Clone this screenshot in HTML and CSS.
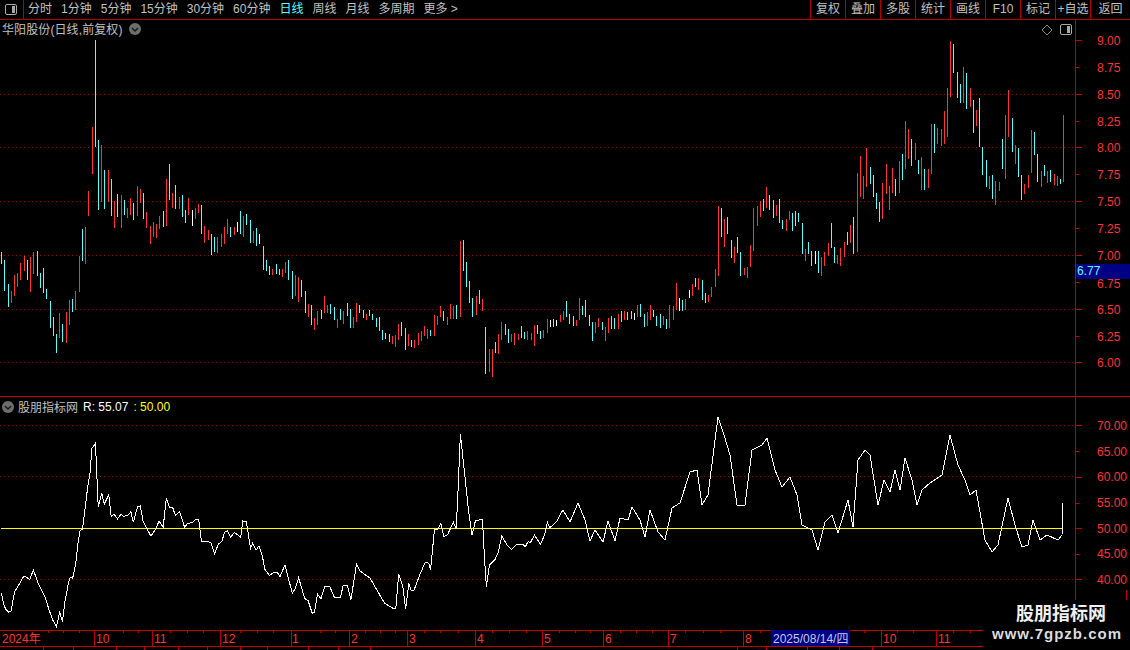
FILE: index.html
```html
<!DOCTYPE html>
<html lang="zh-CN">
<head>
<meta charset="utf-8">
<title>华阳股份</title>
<link rel="stylesheet" href="styles.css">
</head>
<body>
<div class="app">
  <header class="toolbar">
    <div class="layout-btn">
      <svg class="icon-panel" viewBox="0 0 12 11"><rect x="0.5" y="0.5" width="11" height="10" rx="1.5" class="panel-frame"/><rect x="7" y="2" width="3" height="7" class="panel-fill"/></svg>
    </div>
    <nav class="periods">
      <span>分时</span><span>1分钟</span><span>5分钟</span><span>15分钟</span><span>30分钟</span><span>60分钟</span><span class="active">日线</span><span>周线</span><span>月线</span><span>多周期</span><span>更多 &gt;</span>
    </nav>
    <nav class="actions">
      <span>复权</span><span>叠加</span><span>多股</span><span>统计</span><span>画线</span><span>F10</span><span>标记</span><span>+自选</span><span class="back">返回</span>
    </nav>
  </header>

  <section class="pane price-pane">
    <svg class="canvas" viewBox="0 20 1130 376">
      <path class="grid" d="M0 94.5H1075M0 147.5H1075M0 201.5H1075M0 255.5H1075M0 309.5H1075M0 362.5H1075"/>
      <path class="axis" d="M1075.5 20V396M1075 40.5h7M1075 67.5h4M1075 94.5h7M1075 121.5h4M1075 147.5h7M1075 174.5h4M1075 201.5h7M1075 228.5h4M1075 255.5h7M1075 282.5h4M1075 309.5h7M1075 336.5h4M1075 362.5h7"/>
      <path class="bar bar-red" d="M11.5 291V303M14.5 275V296M17.5 273V287M20.5 263V280M24.5 256V271M30.5 257V292M33.5 252V274M59.5 313V338M66.5 312V343M69.5 300V325M75.5 291V310M79.5 256V292M85.5 227V264M88.5 191V216M92.5 127V174M101.5 145V202M108.5 170V202M114.5 201V228M121.5 195V228M127.5 208V218M130.5 198V215M137.5 186V216M140.5 189V203M146.5 212V228M150.5 226V244M153.5 222V237M156.5 224V238M159.5 216V229M166.5 179V226M172.5 193V208M179.5 197V209M188.5 198V215M195.5 208V219M198.5 204V213M204.5 226V243M208.5 230V240M217.5 237V253M221.5 234V247M224.5 227V244M227.5 219V234M234.5 227V235M243.5 216V237M253.5 231V243M272.5 269V275M282.5 269V277M285.5 262V273M295.5 275V296M298.5 277V302M308.5 304V317M314.5 318V330M317.5 311V325M324.5 296V313M327.5 305V313M337.5 319V328M343.5 311V324M353.5 317V328M356.5 303V322M366.5 314V320M392.5 336V344M395.5 335V347M398.5 324V340M408.5 334V346M414.5 340V348M418.5 333V345M421.5 331V341M424.5 326V336M427.5 329V339M434.5 315V336M437.5 316V325M440.5 306V317M447.5 317V325M450.5 304V319M453.5 306V319M460.5 241V317M476.5 296V315M482.5 299V311M489.5 349V372M492.5 349V377M498.5 334V354M501.5 322V340M511.5 334V342M514.5 333V345M518.5 334V340M527.5 331V340M531.5 333V340M534.5 325V346M543.5 330V338M547.5 319V333M560.5 315V322M563.5 311V320M576.5 320V326M579.5 298V320M595.5 322V333M598.5 318V327M605.5 327V341M608.5 318V333M618.5 314V329M624.5 311V320M637.5 305V317M647.5 312V326M650.5 305V320M663.5 316V325M669.5 305V328M673.5 306V320M676.5 283V310M685.5 299V310M692.5 284V296M698.5 278V290M708.5 295V302M711.5 287V297M715.5 269V287M718.5 206V276M724.5 219V247M734.5 247V263M744.5 268V275M747.5 267V278M750.5 245V267M753.5 208V251M757.5 206V226M760.5 201V217M766.5 187V208M776.5 205V216M786.5 219V231M789.5 211V220M805.5 249V261M821.5 257V276M824.5 252V266M828.5 243V256M837.5 255V264M840.5 248V266M844.5 242V257M850.5 225V243M857.5 173V252M860.5 156V197M863.5 176V199M866.5 148V187M882.5 183V219M886.5 164V194M889.5 186V210M892.5 168V193M899.5 161V193M905.5 121V169M908.5 129V159M915.5 143V160M921.5 157V190M928.5 169V188M931.5 124V174M937.5 128V144M941.5 129V146M944.5 111V144M947.5 88V137M950.5 41V97M963.5 67V103M970.5 88V107M976.5 110V126M989.5 176V189M995.5 181V205M999.5 182V191M1005.5 115V179M1008.5 90V137M1015.5 145V164M1024.5 184V194M1028.5 175V188M1031.5 130V173M1041.5 171V187M1047.5 171V183M1054.5 174V185M1057.5 176V186M1063.5 115V182"/>
      <path class="bar bar-cyan" d="M1.5 252V264M4.5 260V291M8.5 284V307M27.5 260V280M37.5 251V276M40.5 273V288M43.5 268V293M46.5 289V299M50.5 301V328M53.5 317V336M56.5 334V353M62.5 324V342M72.5 299V312M82.5 229V261M95.5 40V147M98.5 140V210M104.5 170V209M111.5 179V216M117.5 194V217M124.5 200V215M133.5 203V220M143.5 193V219M163.5 211V227M169.5 164V200M175.5 185V209M182.5 195V217M185.5 210V223M201.5 205V234M211.5 234V255M214.5 237V252M230.5 227V237M240.5 211V234M246.5 214V225M250.5 220V243M256.5 228V246M263.5 246V270M266.5 260V271M269.5 266V275M276.5 264V274M279.5 269V275M288.5 260V280M292.5 271V299M301.5 280V297M305.5 291V313M311.5 305V325M321.5 310V319M330.5 304V314M334.5 307V320M340.5 309V320M347.5 303V316M350.5 309V328M359.5 305V313M363.5 310V318M369.5 310V316M372.5 314V320M376.5 318V327M379.5 317V331M382.5 330V340M385.5 333V339M389.5 334V342M401.5 322V336M405.5 328V350M411.5 340V347M430.5 330V336M443.5 311V321M456.5 305V319M463.5 240V271M466.5 262V287M469.5 281V303M472.5 298V317M479.5 290V304M485.5 327V374M495.5 342V353M505.5 324V335M508.5 329V343M521.5 326V338M524.5 332V339M537.5 325V334M540.5 331V339M553.5 319V327M566.5 301V317M569.5 314V324M573.5 316V326M582.5 306V315M585.5 300V317M589.5 315V326M592.5 322V341M602.5 322V330M611.5 316V329M614.5 318V329M621.5 311V322M627.5 312V320M631.5 311V319M640.5 304V317M644.5 314V327M653.5 310V317M656.5 316V326M660.5 314V328M666.5 319V329M682.5 300V311M695.5 278V287M702.5 280V300M705.5 293V303M721.5 208V237M727.5 217V234M731.5 240V258M737.5 237V253M740.5 252V276M763.5 199V211M769.5 195V210M773.5 200V218M779.5 199V223M782.5 220V229M792.5 213V231M795.5 211V226M798.5 213V222M802.5 223V254M808.5 242V254M811.5 251V266M818.5 251V273M831.5 223V248M834.5 247V263M847.5 232V245M853.5 217V254M870.5 167V184M873.5 175V197M876.5 193V209M879.5 202V222M895.5 179V196M902.5 154V180M911.5 139V166M918.5 160V174M924.5 169V190M934.5 124V153M953.5 44V73M957.5 72V98M960.5 84V103M966.5 73V109M973.5 100V133M979.5 98V147M982.5 147V175M986.5 160V187M992.5 175V199M1002.5 139V169M1012.5 118V152M1018.5 148V177M1021.5 175V200M1034.5 132V155M1037.5 154V182M1044.5 165V176M1050.5 170V182M1060.5 179V184"/>
      <path class="bar bar-white" d="M192.5 210V226M237.5 222V232M259.5 234V244M550.5 320V327M556.5 320V326M634.5 313V320M679.5 298V311M689.5 290V298M815.5 251V264"/>
      <g class="labels">
        <text x="1097" y="45">9.00</text><text x="1097" y="72">8.75</text><text x="1097" y="99">8.50</text><text x="1097" y="126">8.25</text><text x="1097" y="152">8.00</text><text x="1097" y="179">7.75</text><text x="1097" y="206">7.50</text><text x="1097" y="233">7.25</text><text x="1097" y="260">7.00</text><text x="1097" y="288">6.75</text><text x="1097" y="314">6.50</text><text x="1097" y="341">6.25</text><text x="1097" y="367">6.00</text>
      </g>
      <path class="diamond" d="M1047 25l5 5-5 5-5-5z"/>
      <rect class="panel-frame" x="1060.5" y="24.5" width="11" height="10" rx="1.5"/>
      <rect class="panel-fill" x="1067" y="26" width="3" height="7"/>
    </svg>
    <div class="pane-title">
      <span class="stock-name">华阳股份(日线,前复权)</span>
      <svg class="chev" viewBox="0 0 12 12"><circle cx="6" cy="6" r="6" class="chev-disc"/><path d="M3 5l3 3 3-3" class="chev-mark"/></svg>
    </div>
    <div class="price-tag">6.77</div>
  </section>

  <section class="pane ind-pane">
    <svg class="canvas" viewBox="0 397 1130 233">
      <path class="grid" d="M0 425.5H1075M0 476.5H1075M0 579.5H1075"/>
      <path class="axis" d="M1075.5 397V630M1075 425.5h7M1075 451.5h4M1075 477.5h7M1075 503.5h4M1075 528.5h7M1075 554.5h4M1075 579.5h7M1126.5 590V600"/>
      <path class="yellow-line" d="M1 528.5H1063"/>
      <g transform="translate(0 400) scale(.3509 .3333)">
        <path class="rsi" d="M4 578L10 610L16 628L25 637L32 632L38 595L42 575L55 552L68 528L85 538L95 510L110 553L128 590L140 630L150 660L161 680L170 637L178 665L185 605L195 550L200 532L207 535L216 490L222 430L228 392L235 388L242 330L250 260L256 225L262 145L272 130L275 200L280 322L290 280L297 312L310 285L317 350L325 343L335 357L345 342L352 350L365 345L373 335L380 367L392 320L400 318L408 365L418 385L430 408L445 385L453 363L465 382L474 295L483 322L492 322L500 347L512 335L526 382L535 370L548 368L558 357L566 358L574 425L590 423L602 430L612 462L622 432L632 425L640 397L648 393L657 412L668 397L686 412L692 363L702 365L714 445L720 430L730 450L738 438L748 470L755 508L768 527L780 517L790 517L798 530L812 495L833 580L842 565L851 533L868 595L878 602L890 640L896 637L905 583L915 596L925 560L940 560L953 592L970 592L978 557L990 557L1000 600L1016 493L1025 512L1055 535L1096 610L1120 625L1128 625L1136 523L1148 560L1156 627L1165 550L1172 573L1180 570L1198 520L1212 487L1222 490L1227 510L1238 390L1248 388L1256 370L1265 410L1275 405L1292 367L1300 385L1305 280L1312 102L1325 230L1335 330L1345 405L1355 362L1375 358L1380 460L1386 560L1395 495L1410 480L1420 458L1430 408L1445 435L1458 448L1472 433L1490 433L1497 440L1505 425L1512 427L1523 405L1540 433L1552 405L1560 367L1566 382"/>
      </g>
      <path class="rsi" d="M549 528L552 526L557 521L560 515L563 510L570 522L578 503L585 520L590 541L595 530L603 542L608 521L615 541L620 518L628 520L632 507L640 520L645 537L650 510L658 532L665 540L672 508L680 503L690 472L697 470L702 505L708 495L718 417L724 435L730 455L737 505L745 505L752 450L762 445L767 438L775 470L782 487L790 477L797 495L802 525L812 530L818 550L825 522L832 515L838 533L848 500L853 527L858 460L865 450L870 455L878 505L884 480L890 492L895 470L900 490L905 458L912 480L917 505L922 490L930 483L942 475L950 435L958 465L965 480L970 495L976 490L985 540L992 552L998 545L1008 498L1015 525L1022 547L1028 545L1033 520L1040 540L1047 535L1058 540L1062 535L1063 503"/>
      <g class="labels">
        <text x="1097" y="430">70.00</text><text x="1097" y="456">65.00</text><text x="1097" y="481">60.00</text><text x="1097" y="507">55.00</text><text x="1097" y="533">50.00</text><text x="1097" y="558">45.00</text><text x="1097" y="584">40.00</text>
      </g>
    </svg>
    <div class="pane-title ind-title">
      <svg class="chev" viewBox="0 0 12 12"><circle cx="6" cy="6" r="6" class="chev-disc"/><path d="M3 5l3 3 3-3" class="chev-mark"/></svg>
      <span>股朋指标网</span>
      <span class="val-white">R: 55.07</span>
      <span class="val-yellow">: 50.00</span>
    </div>
  </section>

  <section class="time-axis">
    <svg class="time-svg" viewBox="0 630 1130 20">
      <path class="axis" d="M0 630.5H983M0 646.5H983M94.5 630V646M152.5 630V646M220.5 630V646M291.5 630V646M349.5 630V646M407.5 630V646M475.5 630V646M542.5 630V646M603.5 630V646M668.5 630V646M743.5 630V646M881.5 630V646M936.5 630V646"/>
      <path class="axis" d="M48.5 630v3M63.5 630v3M79.5 630v3M123.5 630v3M138.5 630v3M170.5 630v3M187.5 630v3M203.5 630v3M240.5 630v3M257.5 630v3M273.5 630v3M320.5 630v3M335.5 630v3M365.5 630v3M380.5 630v3M395.5 630v3M424.5 630v3M440.5 630v3M458.5 630v3M492.5 630v3M509.5 630v3M526.5 630v3M559.5 630v3M575.5 630v3M590.5 630v3M620.5 630v3M636.5 630v3M652.5 630v3M685.5 630v3M703.5 630v3M720.5 630v3M760.5 630v3M864.5 630v3M897.5 630v3M913.5 630v3M953.5 630v3M970.5 630v3"/>
      <path class="axis" d="M43.5 647V650M73.5 647V650M116.5 647V650M144.5 647V650M178.5 647V650M207.5 647V650M240.5 647V650M267.5 647V650M308.5 647V650M338.5 647V650M370.5 647V650M737.5 647V650M766.5 647V650M807.5 647V650M839.5 647V650M872.5 647V650"/>
      <g class="labels">
        <text x="2" y="643">2024年</text><text x="96" y="643">10</text><text x="154" y="643">11</text><text x="222" y="643">12</text><text x="292" y="643">1</text><text x="351" y="643">2</text><text x="409" y="643">3</text><text x="477" y="643">4</text><text x="544" y="643">5</text><text x="605" y="643">6</text><text x="670" y="643">7</text><text x="745" y="643">8</text><text x="883" y="643">10</text><text x="938" y="643">11</text>
      </g>
      <rect class="date-box" x="771.5" y="630.5" width="78" height="15"/>
      <text class="date-text" x="773" y="643">2025/08/14/四</text>
    </svg>
  </section>

  <aside class="watermark">
    <div class="wm-name">股朋指标网</div>
    <div class="wm-url">www.7gpzb.com</div>
  </aside>
</div>
</body>
</html>
```

FILE: styles.css
```css
* { box-sizing: border-box; }
html, body { margin: 0; padding: 0; background: #000; overflow: hidden; }
body { font-family: "Liberation Sans", "Noto Sans CJK SC", sans-serif; font-size: 12px; color: #c0c0c0; }
.app { position: relative; width: 1130px; height: 650px; overflow: hidden; background: #000; display: flex; flex-direction: column; }

.toolbar { flex: none; display: flex; height: 20px; border-bottom: 1px solid #b40000; line-height: 19px; }
.layout-btn { width: 24px; border-right: 1px solid #b40000; display: flex; align-items: center; padding-left: 5px; }
.icon-panel { width: 12px; height: 11px; display: block; }
.panel-frame { fill: none; stroke: #a8a8a8; stroke-width: 1; }
.panel-fill { fill: #a8a8a8; }
.periods { display: flex; gap: 9px; padding-left: 4px; white-space: nowrap; }
.periods .active { color: #54ffff; }
.actions { margin-left: auto; display: flex; white-space: nowrap; }
.actions span { width: 35px; text-align: center; border-left: 1px solid #b40000; }
.actions .back { width: 40px; }

.pane { position: relative; flex: none; }
.price-pane { height: 377px; border-bottom: 1px solid #c00000; }
.ind-pane { height: 233px; }
.canvas { position: absolute; left: 0; top: 0; width: 1130px; height: 100%; display: block; }

.grid { stroke: #7e0e0e; stroke-width: 1; stroke-dasharray: 1 3; fill: none; shape-rendering: crispEdges; }
.axis { stroke: #c00000; stroke-width: 1; fill: none; shape-rendering: crispEdges; }
.bar { stroke-width: 1; fill: none; shape-rendering: crispEdges; }
.bar-red { stroke: #ff3232; }
.bar-cyan { stroke: #54ffff; }
.bar-white { stroke: #ffffff; }
.labels text { fill: #ff3232; font-size: 12px; font-family: "Liberation Sans", "Noto Sans CJK SC", sans-serif; }
.diamond { fill: none; stroke: #8a8a8a; stroke-width: 1; }
.yellow-line { stroke: #ffff00; stroke-width: 1; fill: none; shape-rendering: crispEdges; }
.rsi { stroke: #ffffff; stroke-width: 1; fill: none; vector-effect: non-scaling-stroke; shape-rendering: crispEdges; }

.pane-title { position: relative; display: flex; align-items: center; gap: 6px; height: 16px; padding: 1px 0 0 2px; white-space: nowrap; }
.stock-name { letter-spacing: 0.1px; }
.chev { width: 12px; height: 12px; flex: none; display: block; }
.chev-disc { fill: #6e6e6e; }
.chev-mark { fill: none; stroke: #151515; stroke-width: 1.4; }
.ind-title { padding: 2px 0 0 2px; gap: 4px; height: 17px; }
.val-white { color: #ffffff; margin-left: 1px; }
.val-yellow { color: #ffff00; margin-left: 1px; }

.price-tag { position: absolute; left: 1076px; top: 244px; width: 54px; height: 15px; line-height: 15px; padding-left: 1px; background: #000084; color: #54ffff; }

.time-axis { flex: none; height: 20px; }
.time-svg { display: block; width: 1130px; height: 20px; }
.date-box { fill: #000084; stroke: #000084; }
.date-text { fill: #c8c8e8; font-size: 12px; font-family: "Liberation Sans", "Noto Sans CJK SC", sans-serif; }

.watermark { position: absolute; left: 984px; top: 600px; width: 146px; height: 50px; background: #000; text-align: center; color: #f0f0f0; }
.wm-name { font-size: 18px; font-weight: 700; line-height: 24px; margin-top: 2px; padding-left: 8px; }
.wm-url { font-size: 15px; font-weight: 700; line-height: 18px; letter-spacing: 1px; margin-top: -1px; color: #dcdcdc; }
```
